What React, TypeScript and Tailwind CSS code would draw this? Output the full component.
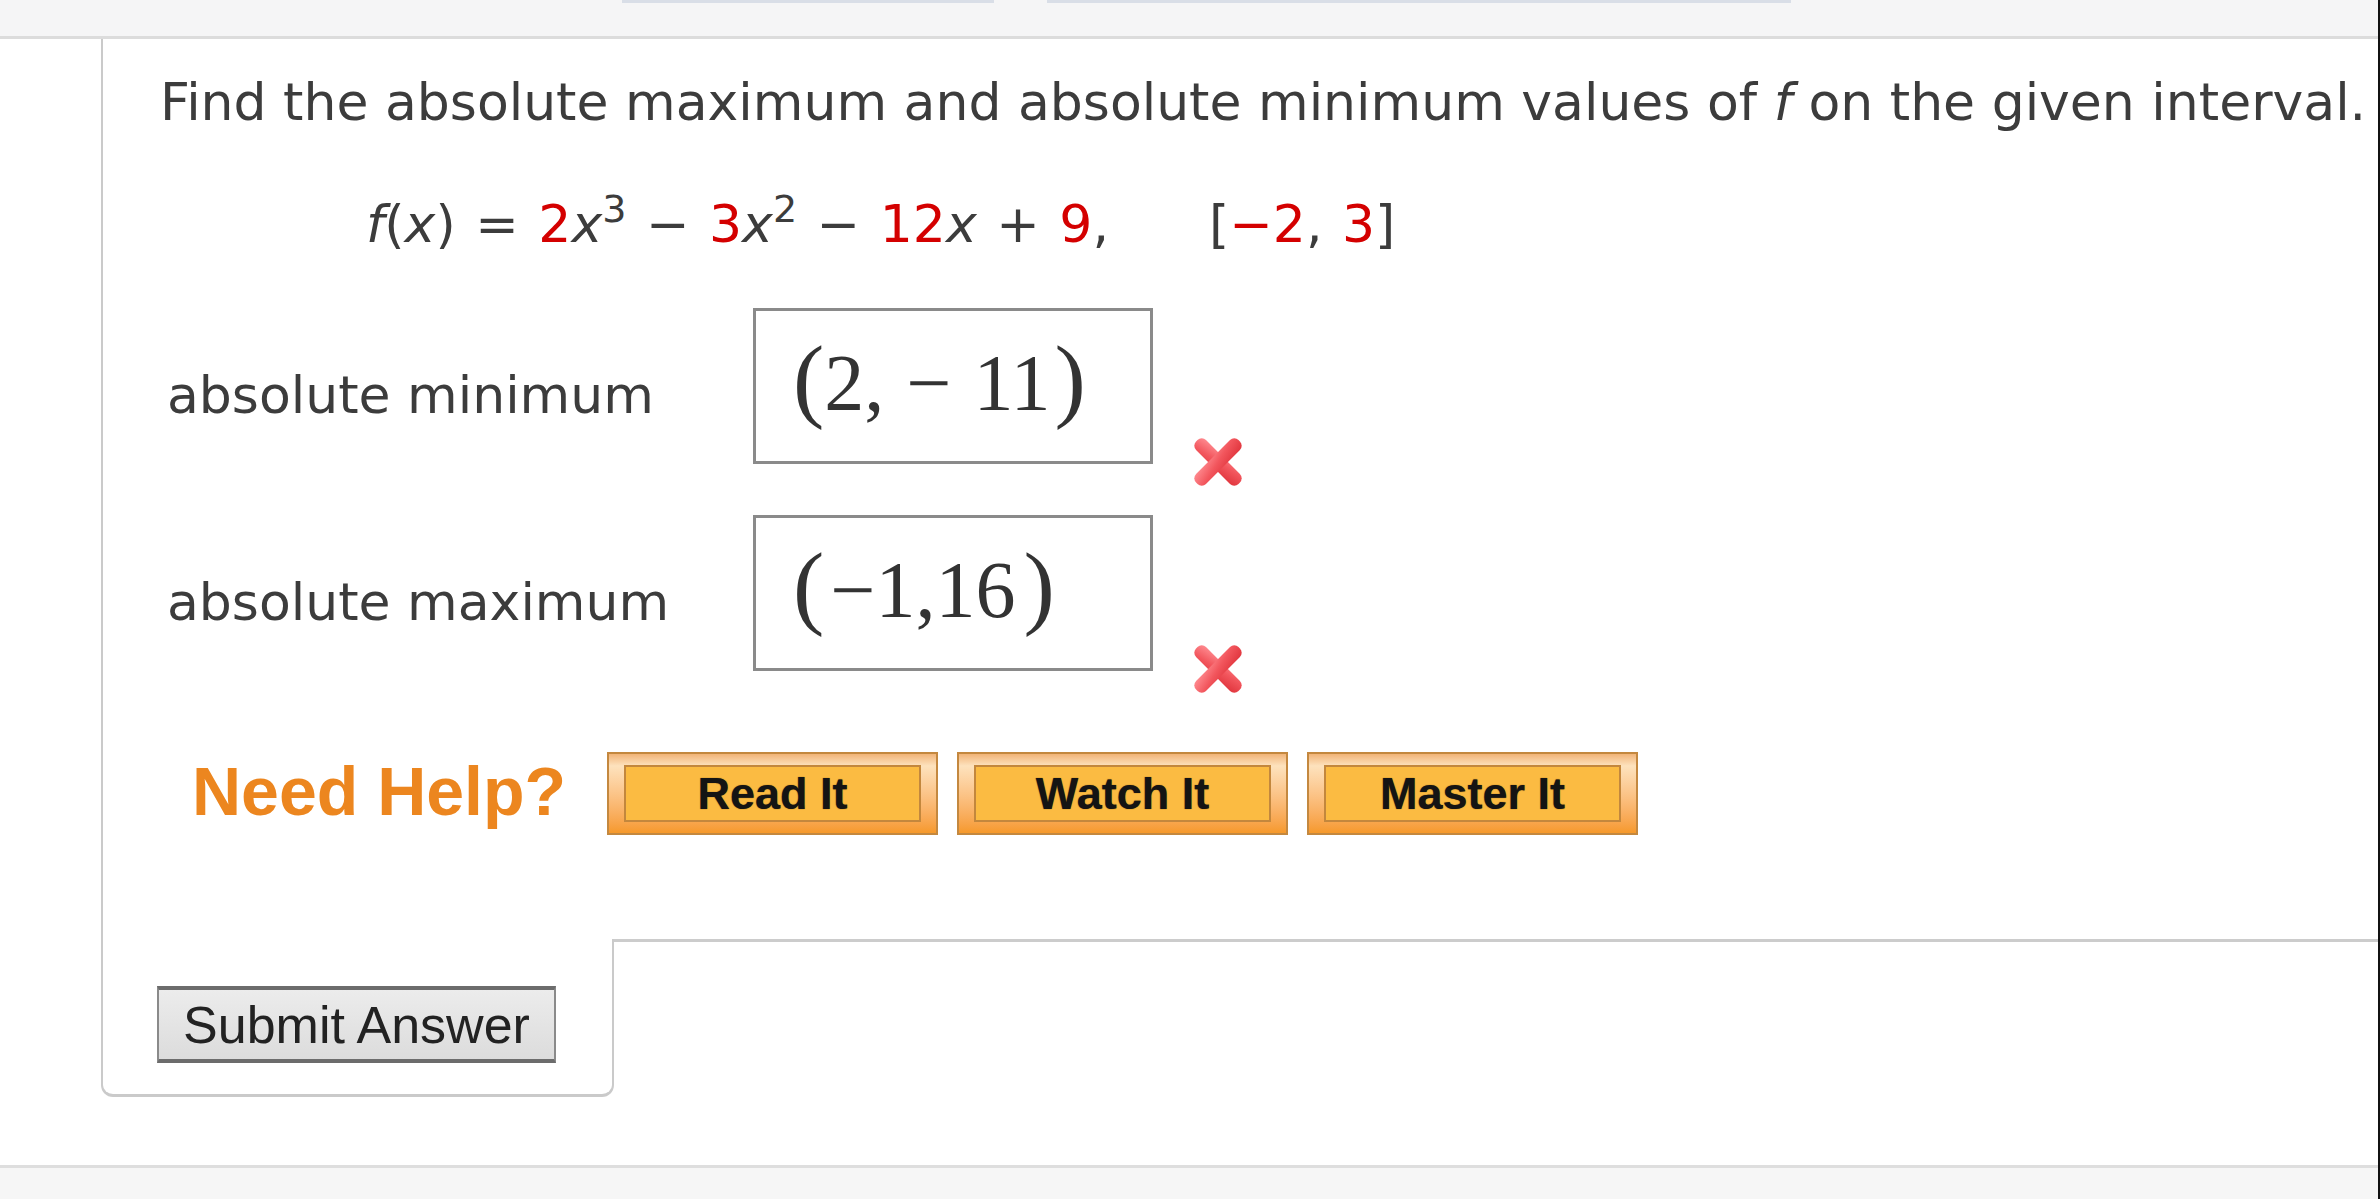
import React from "react";

const sans = "font-['DejaVu_Sans','Verdana',sans-serif]";
const arial = "font-['Liberation_Sans','Arial',sans-serif]";
const serif = "font-['Liberation_Serif','Times_New_Roman',serif]";

function Red({ children }: { children: React.ReactNode }) {
  return <span className="text-[#d40000]">{children}</span>;
}

function Sup({ children }: { children: React.ReactNode }) {
  return (
    <span className="relative -top-[20px] text-[38px] leading-none">
      {children}
    </span>
  );
}

// tall math parens, kept out of the line box height
function Paren({ children }: { children: React.ReactNode }) {
  return <span className="text-[94px] leading-[0px] font-light">{children}</span>;
}

function WrongMark() {
  return (
    <svg width="52" height="54" viewBox="0 0 52 54" aria-label="incorrect">
      <defs>
        <linearGradient id="xg" x1="0" y1="0" x2="1" y2="1">
          <stop offset="0" stopColor="#ff8d92" />
          <stop offset="0.5" stopColor="#f2565d" />
          <stop offset="1" stopColor="#e0343c" />
        </linearGradient>
      </defs>
      <g transform="translate(26 27)">
        <rect x="-30" y="-7" width="60" height="14" rx="6" fill="url(#xg)" transform="rotate(45)" />
        <rect x="-30" y="-7" width="60" height="14" rx="6" fill="url(#xg)" transform="rotate(-45)" />
      </g>
    </svg>
  );
}

function AnswerRow({ label, answer, className = "" }: { label: string; answer: React.ReactNode; className?: string }) {
  return (
    <div className={`flex items-start h-[156px] ml-[7px] ${className}`}>
      <div className={`w-[586px] mt-[57px] text-[52px] leading-[60px] text-[#3c3c3c] ${sans}`}>{label}</div>
      <div className={`w-[400px] h-[156px] border-[3px] border-[#8a8a8a] pl-[37px] pt-[32px] text-[80px] leading-none text-[#333] whitespace-nowrap ${serif}`}>
        {answer}
      </div>
      <div className="ml-[39px] mt-[127px] h-[54px]">
        <WrongMark />
      </div>
    </div>
  );
}

function HelpButton({ label }: { label: string }) {
  return (
    <div className="w-[331px] h-[83px] border-2 border-[#c4883f] bg-linear-to-b from-[#f1b478] via-[#fde2bd] via-15% to-[#f6992a] px-[15px] pt-[11px] pb-[11px]">
      <div
        className={`h-full border-2 border-[#c3873d] bg-[#fbbb42] flex items-center justify-center text-[45px] font-bold text-[#141414] [text-shadow:0_0_1px_#5a3a08] ${arial}`}
      >
        {label}
      </div>
    </div>
  );
}

export default function App() {
  return (
    <div className="w-[2380px] h-[1199px] bg-white flex flex-col overflow-hidden border-r-2 border-[#111]">
      {/* top bar */}
      <div className="h-[39px] shrink-0 bg-[#f5f5f6] border-b-[3px] border-[#dcdcdc] flex items-start">
        <div className="ml-[622px] w-[372px] h-[3px] bg-[#d9dee7]" />
        <div className="ml-[53px] w-[744px] h-[3px] bg-[#d9dee7]" />
      </div>

      {/* question panel */}
      <div className="h-[900px] shrink-0 ml-[101px] border-l-2 border-[#cacaca] pl-[57px] pt-[33px]">
        <p className={`text-[52px] leading-[60px] text-[#3c3c3c] whitespace-nowrap ${sans}`}>
          Find the absolute maximum and absolute minimum values of <i>f</i> on the given interval.
        </p>

        <p className={`mt-[62px] ml-[206px] text-[52px] leading-[60px] text-[#3c3c3c] whitespace-nowrap [word-spacing:3px] ${sans}`}>
          <i>f</i>(<i>x</i>) = <Red>2</Red>
          <i>x</i>
          <Sup>3</Sup> − <Red>3</Red>
          <i>x</i>
          <Sup>2</Sup> − <Red>12</Red>
          <i>x</i> + <Red>9</Red>,<span className="inline-block w-[100px]" />[<Red>−2</Red>, <Red>3</Red>]
        </p>

        <AnswerRow
          className="mt-[54px]"
          label="absolute minimum"
          answer={
            <span>
              <Paren>(</Paren>2,<span className="inline-block w-[22px]" />−<span className="inline-block w-[22px]" />11
              <span className="inline-block w-[4px]" />
              <Paren>)</Paren>
            </span>
          }
        />
        <AnswerRow
          className="mt-[51px]"
          label="absolute maximum"
          answer={
            <span>
              <Paren>(</Paren>
              <span className="inline-block w-[6px]" />−1,16<span className="inline-block w-[8px]" />
              <Paren>)</Paren>
            </span>
          }
        />

        <div className="mt-[81px] ml-[32px] flex items-start">
          <div className={`w-[415px] mt-[5px] text-[68px] leading-none font-bold text-[#ec861f] ${arial}`}>
            Need Help?
          </div>
          <div className="flex gap-[19px]">
            <HelpButton label="Read It" />
            <HelpButton label="Watch It" />
            <HelpButton label="Master It" />
          </div>
        </div>
      </div>

      {/* submit tab */}
      <div className="flex shrink-0">
        <div className="ml-[101px] w-[513px] h-[158px] border-l-2 border-r-2 border-b-[3px] border-[#cacaca] rounded-b-[12px] pt-[47px] pl-[54px]">
          <button
            className={`w-[399px] h-[77px] border-x-2 border-y-4 border-x-[#8a8a8a] border-y-[#6c6c6c] bg-linear-to-b from-[#ececec] to-[#dcdcdc] text-[52px] leading-none text-[#222] ${arial}`}
          >
            Submit Answer
          </button>
        </div>
        <div className="flex-1 h-[3px] bg-[#cccccc]" />
      </div>

      <div className="flex-1" />
      <div className="h-[34px] shrink-0 bg-[#f6f6f6] border-t-[3px] border-[#dedede]" />
    </div>
  );
}
